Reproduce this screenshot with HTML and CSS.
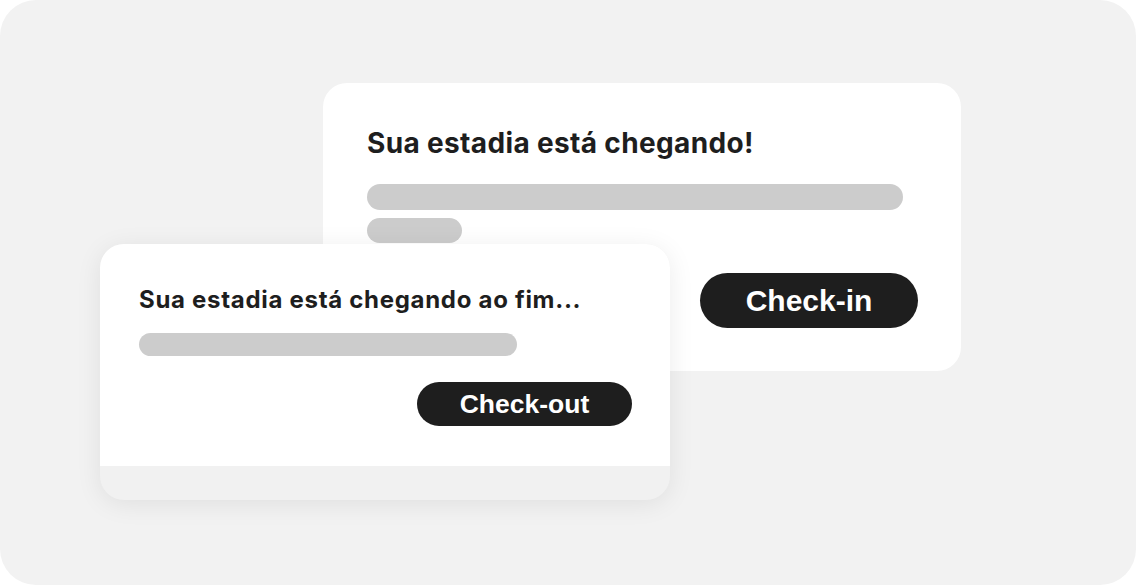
FILE: index.html
```html
<!DOCTYPE html>
<html lang="pt-BR">
<head>
  <meta charset="UTF-8">
  <title>Estadia</title>
  <link rel="stylesheet" href="styles.css">
</head>
<body>

  <div class="canvas">

    <!-- Cartão de trás: check-in -->
    <div class="card card-back">
      <h2 class="title title-lg">Sua estadia está chegando!</h2>
      <div class="bars">
        <div class="bar bar-long"></div>
        <div class="bar bar-short"></div>
      </div>
      <div class="actions">
        <button class="btn btn-lg">Check-in</button>
      </div>
    </div>

    <!-- Cartão da frente: check-out -->
    <div class="card card-front">
      <div class="card-body">
        <h2 class="title title-sm">Sua estadia está chegando ao fim...</h2>
        <div class="bar bar-mid"></div>
        <div class="actions">
          <button class="btn btn-sm">Check-out</button>
        </div>
      </div>
      <div class="card-foot"></div>
    </div>

  </div>

</body>
</html>
```

FILE: styles.css
```css
html, body {
  margin: 0;
  background: #ffffff;
}
body {
  font-family: Inter, "Noto Sans", sans-serif;
  color: #1e1e1e;
}
.canvas {
  position: relative;
  box-sizing: border-box;
  width: 1136px;
  height: 585px;
  background: #f2f2f2;
  border-radius: 36px;
  padding: 83px 0 0 323px;
}
.card {
  background: #ffffff;
  border-radius: 24px;
  box-sizing: border-box;
}
.card-back {
  width: 638px;
  height: 288px;
  padding: 43px 43px 43px 44px;
  display: flex;
  flex-direction: column;
}
.card-front {
  position: absolute;
  left: 100px;
  top: 244px;
  width: 570px;
  height: 256px;
  background: #f1f1f1;
  overflow: hidden;
  box-shadow: 0 4px 26px rgba(0, 0, 0, 0.08);
}
.card-body {
  background: #ffffff;
  height: 222px;
  box-sizing: border-box;
  padding: 42px 38px 0 39px;
  display: flex;
  flex-direction: column;
}
.title {
  margin: 0;
  font-weight: 700;
}
.title-lg {
  font-size: 28px;
  line-height: 34px;
  letter-spacing: 0.35px;
}
.title-sm {
  font-size: 24px;
  line-height: 28px;
  letter-spacing: 0.7px;
}
.bars {
  display: flex;
  flex-direction: column;
  gap: 8px;
  margin-top: 24px;
}
.bar {
  background: #cccccc;
  border-radius: 14px;
}
.bar-long {
  width: 536px;
  height: 26px;
}
.bar-short {
  width: 95px;
  height: 25px;
}
.bar-mid {
  width: 378px;
  height: 23px;
  margin-top: 19px;
}
.actions {
  display: flex;
  justify-content: flex-end;
}
.card-back .actions {
  margin-top: 30px;
}
.card-body .actions {
  margin-top: 26px;
}
.btn {
  border: none;
  background: #1e1e1e;
  color: #ffffff;
  font-family: "Liberation Sans", Arial, sans-serif;
  font-weight: bold;
  border-radius: 30px;
  padding: 0;
}
.btn-lg {
  width: 218px;
  height: 55px;
  font-size: 30px;
}
.btn-sm {
  width: 215px;
  height: 44px;
  font-size: 26.5px;
}
```
